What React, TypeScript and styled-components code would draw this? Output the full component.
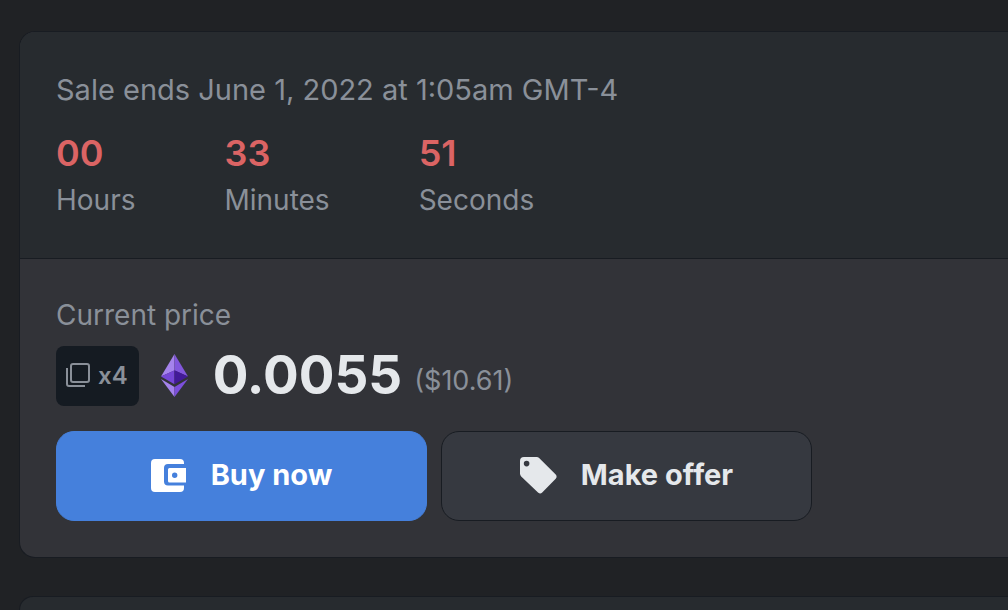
import React from "react";
import styled, { createGlobalStyle } from "styled-components";

const GlobalStyle = createGlobalStyle`
  * { box-sizing: border-box; }
  html { background: #202225; }
  body { margin: 0; font-family: Inter, "Liberation Sans", sans-serif; color: #8a9099; }
  h2, p, dl, dt, dd { margin: 0; font-weight: 400; }
`;

const Page = styled.main`
  display: flex;
  flex-direction: column;
  gap: 38px;
  min-height: 100vh;
  padding: 31px 0 0 19px;
`;

const Card = styled.section`
  border: 1px solid #181c22;
  border-right: 0;
  border-radius: 16px 0 0 16px;
  background: #323338;
  overflow: hidden;
`;

const Countdown = styled.header`
  padding: 36px 36px 35px;
  background: #272b2f;
  border-bottom: 1px solid #181c22;
`;

const SaleEnds = styled.h2`
  font-size: 29px;
  line-height: 44px;
`;

const Timer = styled.dl`
  display: flex;
  gap: 89px;
  margin-top: 16px;
`;

const Unit = styled.div`
  display: flex;
  flex-direction: column-reverse;
`;

const UnitLabel = styled.dt`
  font-size: 28px;
  line-height: 45px;
`;

const UnitValue = styled.dd`
  font-size: 36px;
  line-height: 50px;
  font-weight: 600;
  color: #db6464;
`;

const Offer = styled.div`
  padding: 36px;
`;

const PriceLabel = styled.p`
  font-size: 28px;
  line-height: 40px;
`;

const PriceRow = styled.div`
  display: flex;
  align-items: center;
  margin-top: 11px;
`;

const Quantity = styled.span`
  display: flex;
  align-items: center;
  gap: 8px;
  height: 60px;
  padding: 0 11px 2px 10px;
  border-radius: 8px;
  background: #151b22;
  font-size: 24px;
  font-weight: 600;
`;

const EthMark = styled.svg`
  margin: 0 25px 2px 22px;
`;

const Price = styled.strong`
  padding-bottom: 2px;
  font-size: 53px;
  line-height: 58px;
  font-weight: 700;
  color: #e5e8eb;
`;

const Fiat = styled.span`
  margin: 10px 0 0 12px;
  font-size: 27px;
  line-height: 40px;
`;

const Actions = styled.div`
  display: grid;
  grid-template-columns: repeat(2, minmax(0, 371px));
  gap: 14px;
  margin-top: 25px;
`;

const ActionButton = styled.button<{ $primary?: boolean }>`
  display: flex;
  align-items: center;
  justify-content: center;
  gap: 24px;
  height: 90px;
  padding: 0 0 2px;
  border: 1px solid ${(p) => (p.$primary ? "#4580dc" : "#181c22")};
  border-radius: 18px;
  background: ${(p) => (p.$primary ? "#4580dc" : "#363940")};
  color: ${(p) => (p.$primary ? "#ffffff" : "#e5e8eb")};
  font: 700 29px/40px Inter, "Liberation Sans", sans-serif;
  cursor: pointer;
`;

const NextCard = styled(Card)`
  flex: 1;
  border-bottom: 0;
  border-radius: 16px 0 0 0;
  background: #272b2f;
`;

const CopiesIcon = () => (
  <svg width="24" height="24" viewBox="0 0 24 24" fill="none" stroke="currentColor" strokeWidth="2" aria-hidden="true">
    <rect x="5" y="1" width="18" height="18" rx="2" />
    <path d="M1 5v16q0 2 2 2h16" />
  </svg>
);

const EthIcon = () => (
  <EthMark width="27" height="43" viewBox="0 0 27 43" role="img" aria-label="ETH">
    <path fill="#a583ec" d="M13.5 0 0 22.500l13.500-6z" />
    <path fill="#8257dc" d="M13.5 0 27 22.500l-13.500-6z" />
    <path fill="#7546d6" d="M0 22.500l13.500-6.200v14z" />
    <path fill="#421a98" d="M27 22.500l-13.500-6.200v14z" />
    <path fill="#a583ec" d="M0 25l13.500 8v10z" />
    <path fill="#7c4fdb" d="M27 25l-13.500 8v10z" />
  </EthMark>
);

const WalletIcon = () => (
  <svg width="36" height="36" viewBox="0 0 36 36" fill="currentColor" aria-hidden="true">
    <path d="M4 2h25q4 0 4 4V7H17q-4 0-4 4v13.500q0 4 4 4h16v2.500q0 4-4 4H4q-4 0-4-4V6q0-4 4-4z" />
    <path fillRule="evenodd" d="M18.500 11H35v14.500H18.500q-1.500 0-1.500-1.500v-11.500q0-1.500 1.500-1.500zM23.700 15.500a2.700 2.700 0 1 0 0 5.400 2.700 2.700 0 0 0 0-5.400z" />
  </svg>
);

const TagIcon = () => (
  <svg width="37" height="37" viewBox="0 0 37 37" fill="currentColor" aria-hidden="true">
    <path fillRule="evenodd" d="M4 0h12.500q1.700 0 2.900 1.200L35.700 17.500q1.800 2.200 0 4.200L22.200 35.500q-2 1.800-4.200 0L1.200 19.400Q0 18.200 0 16.500V4q0-4 4-4zM6.600 3.800a2.800 2.800 0 1 0 0 5.600 2.800 2.800 0 0 0 0-5.600z" />
  </svg>
);

const units = [
  { label: "Hours", value: "00" },
  { label: "Minutes", value: "33" },
  { label: "Seconds", value: "51" },
];

export default function App() {
  return (
    <>
      <GlobalStyle />
      <Page>
        <Card>
          <Countdown>
            <SaleEnds>Sale ends June 1, 2022 at 1:05am GMT-4</SaleEnds>
            <Timer>
              {units.map((u) => (
                <Unit key={u.label}>
                  <UnitLabel>{u.label}</UnitLabel>
                  <UnitValue>{u.value}</UnitValue>
                </Unit>
              ))}
            </Timer>
          </Countdown>
          <Offer>
            <PriceLabel>Current price</PriceLabel>
            <PriceRow>
              <Quantity>
                <CopiesIcon />
                x4
              </Quantity>
              <EthIcon />
              <Price>0.0055</Price>
              <Fiat>($10.61)</Fiat>
            </PriceRow>
            <Actions>
              <ActionButton type="button" $primary>
                <WalletIcon />
                Buy now
              </ActionButton>
              <ActionButton type="button">
                <TagIcon />
                Make offer
              </ActionButton>
            </Actions>
          </Offer>
        </Card>
        <NextCard />
      </Page>
    </>
  );
}
